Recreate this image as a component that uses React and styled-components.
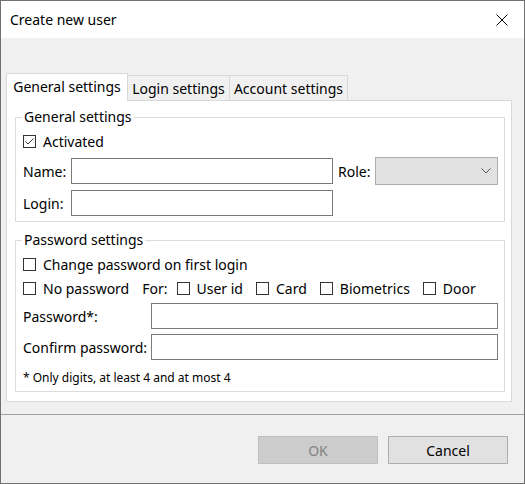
import React from "react"
import styled, { createGlobalStyle } from "styled-components"

const FONT = `"Noto Sans", "Open Sans", sans-serif`

const GlobalStyle = createGlobalStyle`
  html, body {
    margin: 0;
    padding: 0;
    background: #ffffff;
  }
  body {
    font-family: ${FONT};
    font-size: 14px;
    color: #000;
  }
  * {
    box-sizing: border-box;
  }
`

const Window = styled.div`
  width: 525px;
  height: 484px;
  border: 1px solid #707070;
  background: #f0f0f0;
  display: flex;
  flex-direction: column;
`

const TitleBar = styled.div`
  height: 37px;
  background: #ffffff;
  display: flex;
  align-items: center;
  justify-content: space-between;
  padding: 0 16px 0 9px;
  font-size: 14px;
`

const CloseIcon = styled.svg`
  width: 12px;
  height: 12px;
  display: block;
  margin-top: 1px;
`

const Content = styled.div`
  height: 376px;
  padding: 35px 12px 0 5px;
`

const TabStrip = styled.div`
  display: flex;
  align-items: flex-end;
  height: 27px;
`

const Tab = styled.div`
  width: ${p => p.$w}px;
  height: ${p => (p.$active ? 28 : 25)}px;
  margin-left: ${p => (p.$first ? 0 : -1)}px;
  margin-bottom: ${p => (p.$active ? -1 : 0)}px;
  border: 1px solid #d9d9d9;
  border-bottom: none;
  background: ${p => (p.$active ? "#ffffff" : "#f0f0f0")};
  position: relative;
  z-index: ${p => (p.$active ? 2 : 1)};
  display: flex;
  align-items: center;
  justify-content: center;
  padding-bottom: ${p => (p.$active ? 3 : 0)}px;
  white-space: nowrap;
`

const Panel = styled.div`
  width: 506px;
  height: 302px;
  background: #ffffff;
  border: 1px solid #d9d9d9;
  padding: 6px 6px 0 8px;
  display: flex;
  flex-direction: column;
  gap: 8px;
`

const Group = styled.fieldset`
  margin: 0;
  min-width: 0;
  border: 1px solid #dcdcdc;
  padding: ${p => p.$pad};
  display: flex;
  flex-direction: column;
`

const Legend = styled.legend`
  padding: 0 2px;
  margin-left: -1px;
  line-height: 20px;
  height: 20px;
`

const Row = styled.div`
  display: flex;
  align-items: center;
  height: ${p => p.$h}px;
  margin-top: ${p => p.$mt}px;
`

const Label = styled.span`
  width: ${p => p.$w}px;
  margin-left: ${p => p.$ml || 0}px;
  flex-shrink: 0;
  white-space: nowrap;
`

const TextBox = styled.div`
  width: ${p => (p.$w ? `${p.$w}px` : "auto")};
  flex: ${p => (p.$w ? "none" : "1")};
  height: 26px;
  border: 1px solid #7a7a7a;
  background: #ffffff;
`

const Select = styled.div`
  flex: 1;
  height: 28px;
  border: 1px solid #adadad;
  background: #e1e1e1;
  display: flex;
  align-items: center;
  justify-content: flex-end;
  padding-right: 6px;
`

const Check = styled.label`
  display: flex;
  align-items: center;
  gap: 7px;
  white-space: nowrap;
  margin-right: 13px;
`

const Box = styled.span`
  width: 13px;
  height: 13px;
  border: 1px solid #333333;
  background: #ffffff;
  display: flex;
  align-items: center;
  justify-content: center;
  flex-shrink: 0;
`

const ForLabel = styled.span`
  margin-right: 9px;
`

const Note = styled.div`
  font-size: 12px;
  line-height: 16px;
  margin-top: 10px;
`

const Separator = styled.div`
  height: 1px;
  background: #a0a0a0;
`

const Footer = styled.div`
  flex: 1;
  display: flex;
  justify-content: flex-end;
  align-items: flex-start;
  gap: 10px;
  padding: 21px 16px 0 0;
`

const Button = styled.div`
  width: 120px;
  height: 28px;
  border: 1px solid ${p => (p.$disabled ? "#bfbfbf" : "#adadad")};
  background: ${p => (p.$disabled ? "#cccccc" : "#e1e1e1")};
  color: ${p => (p.$disabled ? "#838383" : "#000000")};
  display: flex;
  align-items: center;
  justify-content: center;
`

const CheckBox = ({ checked, children }) => (
  <Check>
    <Box>
      {checked && (
        <svg width="11" height="11" viewBox="0 0 11 11">
          <path d="M1.5 5.5 L4 8 L9.5 2.5" fill="none" stroke="#3a3a3a" strokeWidth="1" />
        </svg>
      )}
    </Box>
    {children}
  </Check>
)

const App = () => (
  <>
    <GlobalStyle />
    <Window>
      <TitleBar>
        <span>Create new user</span>
        <CloseIcon viewBox="0 0 12 12">
          <path d="M0.5 0.5 L11.5 11.5 M11.5 0.5 L0.5 11.5" stroke="#000" strokeWidth="1" />
        </CloseIcon>
      </TitleBar>
      <Content>
        <TabStrip>
          <Tab $active $first $w={122}>General settings</Tab>
          <Tab $w={103}>Login settings</Tab>
          <Tab $w={119}>Account settings</Tab>
        </TabStrip>
        <Panel>
          <Group $pad="0 6px 5px 7px">
            <Legend>General settings</Legend>
            <Row $h={20} $mt={4}>
              <CheckBox checked>Activated</CheckBox>
            </Row>
            <Row $h={28} $mt={6}>
              <Label $w={48}>Name:</Label>
              <TextBox $w={262} />
              <Label $w={37} $ml={5}>Role:</Label>
              <Select>
                <svg width="10" height="6" viewBox="0 0 10 6">
                  <path d="M0.5 0.5 L5 5 L9.5 0.5" fill="none" stroke="#555" strokeWidth="1" />
                </svg>
              </Select>
            </Row>
            <Row $h={26} $mt={5}>
              <Label $w={48}>Login:</Label>
              <TextBox $w={262} />
            </Row>
          </Group>
          <Group $pad="0 6px 5px 7px">
            <Legend>Password settings</Legend>
            <Row $h={20} $mt={4}>
              <CheckBox>Change password on first login</CheckBox>
            </Row>
            <Row $h={20} $mt={4}>
              <CheckBox>No password</CheckBox>
              <ForLabel>For:</ForLabel>
              <CheckBox>User id</CheckBox>
              <CheckBox>Card</CheckBox>
              <CheckBox>Biometrics</CheckBox>
              <CheckBox>Door</CheckBox>
            </Row>
            <Row $h={26} $mt={5}>
              <Label $w={128}>Password*:</Label>
              <TextBox />
            </Row>
            <Row $h={26} $mt={5}>
              <Label $w={128}>Confirm password:</Label>
              <TextBox />
            </Row>
            <Note>* Only digits, at least 4 and at most 4</Note>
          </Group>
        </Panel>
      </Content>
      <Separator />
      <Footer>
        <Button $disabled>OK</Button>
        <Button>Cancel</Button>
      </Footer>
    </Window>
  </>
)

export default App
